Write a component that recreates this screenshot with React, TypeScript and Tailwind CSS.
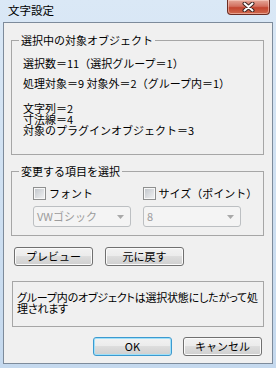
import React from 'react'

const jp = "font-['Noto_Sans_CJK_JP','Noto_Sans_CJK_SC',sans-serif]"

function CheckBox({ label }: { label: string }) {
  return (
    <label className="flex items-center gap-[3px]">
      <span className="flex h-[13px] w-[13px] items-center justify-center border border-[#8e8f8f] bg-[#f7f7f7]">
        <span className="h-[9px] w-[9px] bg-[linear-gradient(135deg,#c4c8cd,#eeeff0)]" />
      </span>
      <span className="leading-[13px]">{label}</span>
    </label>
  )
}

function Combo({ value }: { value: string }) {
  return (
    <div className="flex h-[21px] w-[98px] items-center justify-between rounded-[3px] border border-[#bcbfc2] bg-[#f4f4f4] pl-[3px] pr-[6px] text-[#9c9c9c]">
      <span className="leading-[13px]">{value}</span>
      <svg width="7" height="4" viewBox="0 0 7 4">
        <path d="M0 0h7L3.5 4z" fill="#a9a9a9" />
      </svg>
    </div>
  )
}

function Button({ label, primary }: { label: string; primary?: boolean }) {
  return (
    <button
      className={
        primary
          ? 'flex h-[19px] w-[79px] items-center justify-center rounded-[3px] border border-[#3c9ad0] bg-[linear-gradient(#f2f2f2_0%,#ebebeb_50%,#dddddd_50%,#cfcfcf_100%)] leading-[13px] shadow-[inset_0_0_0_1px_#9fe0f9]'
          : 'flex h-[19px] w-[79px] items-center justify-center rounded-[3px] border border-[#707070] bg-[linear-gradient(#f2f2f2_0%,#ebebeb_50%,#dddddd_50%,#cfcfcf_100%)] leading-[13px] shadow-[inset_0_0_0_1px_#fbfbfb]'
      }
    >
      {label}
    </button>
  )
}

export default function App() {
  return (
    <div className={`flex h-[368px] w-[276px] flex-col bg-[linear-gradient(180deg,#dae8f6,#c5d9ee)] text-[11px] text-black ${jp}`}>
      {/* title bar */}
      <div className="flex h-[22px] items-start">
        <span className="ml-[8px] mt-[3px] text-[11.5px] leading-[14px]">文字設定</span>
        <div className="ml-auto mr-[6px] flex h-[15px] w-[43px] items-center justify-center rounded-b-[4px] border border-t-0 border-[#6b2c22] bg-[linear-gradient(180deg,#e5a899_0%,#d2705f_45%,#c3452f_55%,#d06a4f_100%)] shadow-[inset_0_0_0_1px_rgba(255,220,210,0.5)]">
          <svg width="13" height="10" viewBox="0 0 13 10">
            <path d="M2.5 1.5l8 7M10.5 1.5l-8 7" stroke="#3a2420" strokeWidth="4" strokeLinecap="round" />
            <path d="M2.5 1.5l8 7M10.5 1.5l-8 7" stroke="#ffffff" strokeWidth="2" strokeLinecap="round" />
          </svg>
        </div>
      </div>

      {/* client area */}
      <div className="mx-[3px] flex h-[342px] w-[270px] flex-col border border-[#7d8b9b] bg-[#f0f0f0]">
        <fieldset className="ml-[7px] mt-[10px] h-[122px] w-[253px] border border-[#a6a6a6] p-0">
          <legend className="ml-[7px] px-[2px] leading-[14px]">選択中の対象オブジェクト</legend>
          <div className="pl-[11px] pt-[11px] leading-[11px]">
            <div>選択数＝11（選択グループ＝1）</div>
            <div className="mt-[9px]">処理対象＝9 対象外＝2（グループ内＝1）</div>
            <div className="mt-[14px]">文字列＝2</div>
            <div>寸法線＝4</div>
            <div>対象のプラグインオブジェクト＝3</div>
          </div>
        </fieldset>

        <fieldset className="ml-[7px] mt-[9px] h-[72px] w-[253px] border border-[#a6a6a6] p-0">
          <legend className="ml-[7px] px-[2px] leading-[14px]">変更する項目を選択</legend>
          <div className="grid grid-cols-[110px_110px] gap-y-[6px] pl-[21px] pt-[9px]">
            <CheckBox label="フォント" />
            <CheckBox label="サイズ（ポイント）" />
            <Combo value="VWゴシック" />
            <Combo value="8" />
          </div>
        </fieldset>

        <div className="ml-[10px] mt-[11px] flex gap-[12px]">
          <Button label="プレビュー" />
          <Button label="元に戻す" />
        </div>

        <div className="ml-[8px] mt-[15px] h-[46px] w-[252px] whitespace-nowrap border border-[#a6a6a6] pl-[4px] pt-[10px] leading-[11px] tracking-[-0.2px] [font-feature-settings:'palt']">
          グループ内のオブジェクトは選択状態にしたがって処
          <br />
          理されます
        </div>

        <div className="mr-[10px] mt-[10px] flex justify-end gap-[11px]">
          <Button label="OK" primary />
          <Button label="キャンセル" />
        </div>
      </div>
    </div>
  )
}
